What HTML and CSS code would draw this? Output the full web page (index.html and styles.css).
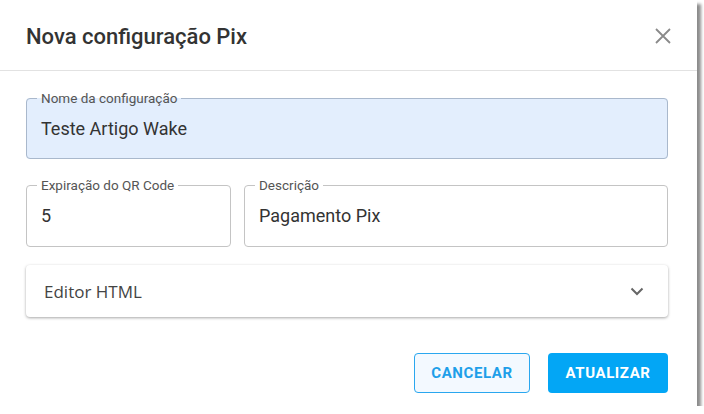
FILE: index.html
```html
<!DOCTYPE html>
<html lang="pt">
<head>
    <meta charset="UTF-8">
    <title>Nova configuração Pix</title>
    <link rel="stylesheet" href="styles.css">
</head>
<body>
    <div class="dialog">
        <div class="dialog-header">
            <h2 class="dialog-title">Nova configuração Pix</h2>
            <span class="close">
                <svg width="16" height="16" viewBox="0 0 16 16">
                    <path d="M1 1 L15 15 M15 1 L1 15" stroke="#8a8a8a" stroke-width="1.8" fill="none"/>
                </svg>
            </span>
        </div>
        <div class="dialog-body">
            <fieldset class="field field-filled">
                <legend>Nome da configuração</legend>
                <div class="field-value">Teste Artigo Wake</div>
            </fieldset>
            <div class="row">
                <fieldset class="field">
                    <legend>Expiração do QR Code</legend>
                    <div class="field-value">5</div>
                </fieldset>
                <fieldset class="field">
                    <legend>Descrição</legend>
                    <div class="field-value">Pagamento Pix</div>
                </fieldset>
            </div>
            <div class="accordion">
                <span>Editor HTML</span>
                <svg width="14" height="9" viewBox="0 0 14 9">
                    <path d="M1.5 1.5 L7 7 L12.5 1.5" stroke="#666" stroke-width="2" fill="none"/>
                </svg>
            </div>
        </div>
        <div class="dialog-footer">
            <button class="btn btn-outline">CANCELAR</button>
            <button class="btn btn-primary">ATUALIZAR</button>
        </div>
    </div>
</body>
</html>
```

FILE: styles.css
```css
* {
    margin: 0;
    padding: 0;
    box-sizing: border-box;
}
body {
    background: #fff;
    font-family: Roboto, "Liberation Sans", sans-serif;
    color: #333;
}

.dialog {
    width: 697px;
    height: 406px;
    background: #fff;
    box-shadow: 4px 4px 3px rgba(0, 0, 0, .45);
}

.dialog-header {
    display: flex;
    justify-content: space-between;
    align-items: center;
    height: 71px;
    padding: 0 26px 0 26px;
    border-bottom: 1px solid #e2e2e2;
}
.dialog-title {
    font-size: 22px;
    font-weight: 500;
    color: #333;
    margin-top: 2px;
}
.close {
    display: flex;
    margin-top: 2px;
}

.dialog-body {
    padding: 20px 29px 0 26px;
}

.field {
    border: 1px solid #c4c4c4;
    border-radius: 4px;
    padding: 0 14px 6px;
    min-width: 0;
}
.field legend {
    font-size: 13.5px;
    line-height: 14px;
    color: #555;
    padding: 0 4px;
    margin-left: -4px;
}
.field-value {
    height: 47px;
    line-height: 47px;
    font-size: 18px;
    color: #333;
}
.field-filled {
    background: #e3eefd;
    border-color: #a9b8cc;
}

.row {
    display: grid;
    grid-template-columns: 205px 1fr;
    gap: 13px;
    margin-top: 19px;
}
.row .field-value {
    height: 48px;
    line-height: 48px;
}

.accordion {
    display: flex;
    justify-content: space-between;
    align-items: center;
    height: 52px;
    margin-top: 18px;
    padding: 0 24px 0 18px;
    border-radius: 4px;
    background: #fff;
    box-shadow: 0 1px 3px rgba(0, 0, 0, .35);
    font-family: "Open Sans", sans-serif;
    font-size: 17px;
    color: #444;
}

.dialog-footer {
    display: flex;
    justify-content: flex-end;
    gap: 18px;
    padding: 36px 29px 0 0;
}
.btn {
    height: 40px;
    border-radius: 4px;
    font-family: Roboto, sans-serif;
    font-size: 15px;
    font-weight: 700;
    letter-spacing: .6px;
}
.btn-outline {
    width: 116px;
    border: 1px solid #2aa7ef;
    background: #f3f9ff;
    color: #1e9fe9;
}
.btn-primary {
    width: 120px;
    border: none;
    background: #03a6f5;
    color: #fff;
}
```
